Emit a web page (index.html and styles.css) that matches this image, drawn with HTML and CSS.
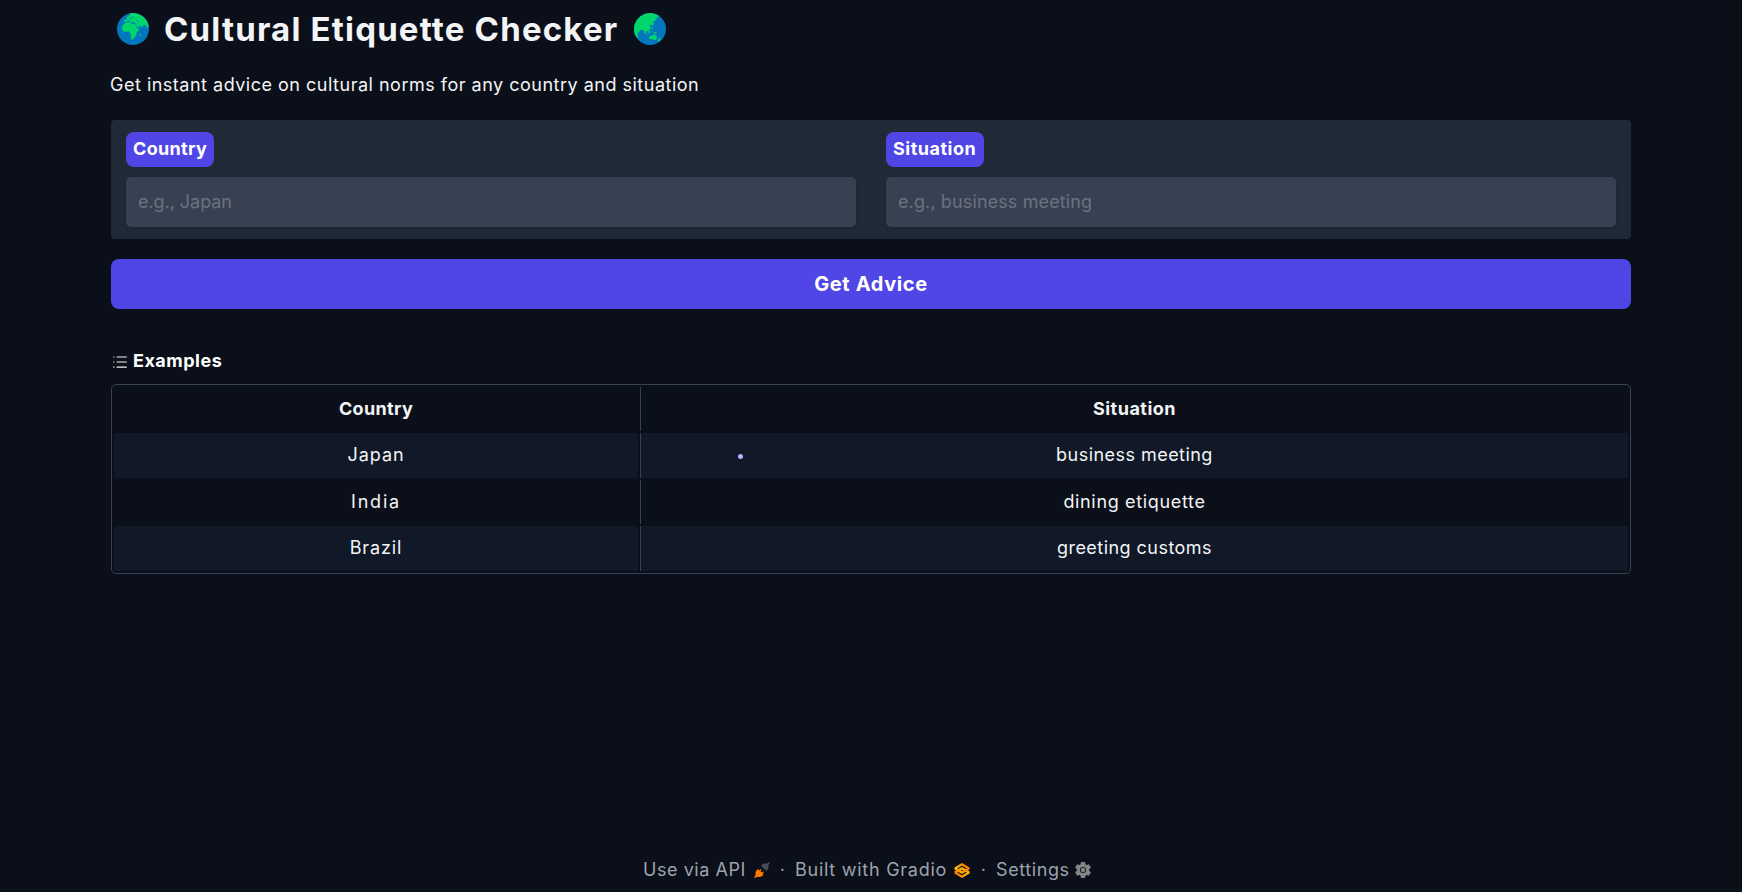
FILE: index.html
```html
<!DOCTYPE html>
<html lang="en">
<head>
<meta charset="utf-8">
<title>Cultural Etiquette Checker</title>
<link rel="stylesheet" href="styles.css">
</head>
<body>
<main class="app">
  <h1 class="title">
    <svg class="globe" viewBox="0 0 32 32" aria-hidden="true">
      <circle cx="16" cy="16" r="16" fill="#0277bd"/>
      <path fill="#00d66b" d="M5 13.500L8 9.800l5-.7 1.200 1.500 3.800.3 2 4.100 2.500 1.500-3 3-.5 3-3.500 4.500-1.500-1-.5-6-2-1.500-4.500.3-2-2.300z"/>
      <path fill="#00d66b" d="M6.800 8.800l.4-1.800 2.800-.5L9.500 4 12 3l1.300-2.800A16 16 0 0 1 31.800 13.500L30 15l-1.500-3.200-2 .2-1.500 2.800-2-2.800-1 3-2-1.500-1.700-3.500-2.800-.9-2 .2L12 7.600l-2.500 1z"/>
      <path fill="#00d66b" d="M22.300 21.500l1.200-1.200.1 1.900-1 1.400z"/>
      <path fill="none" stroke="#0277bd" stroke-width=".8" d="M12.500 5.800l2.300-.5 1-2M19 7.600l2.300.5"/>
    </svg>
    <span class="title-text">Cultural Etiquette Checker</span>
    <svg class="globe" viewBox="0 0 32 32" aria-hidden="true">
      <circle cx="16" cy="16" r="16" fill="#0277bd"/>
      <path fill="#00d66b" d="M1 21.500A16 16 0 0 1 25 2.800l-.8 1.700-2.700.8 1 2-3 .8.300 2.700-1 2.400-1.500-1.800-1.700 1.400 1.300 2-2.700 3.700-1.900-.5-1.300 2.500L9 17l-3 .1-1.200 2.600-1.400-.4.500 3.500-.5 2.700z"/>
      <path fill="#00d66b" d="M15 25.500l.3-2 3.200-1.200.8-1 1.500.6 1-.5 1.300 3.200-1.300 2.500-2.300-.3-1.500-.9-2.500.3zM23.500 28l2.200-3.500 1.200 1.200-1.700 2.800zM10.800 18.700l2.500 2.600-.6.600-2.400-2.300zM14.600 17.700l2 .4-.6 2.100-1.600-.5zM17.800 14l1.500 2.100-.7.700-1.200-1.500zM19.500 18.500l3.300 1.200-.3 1.300-2.500-.8z"/>
    </svg>
  </h1>
  <p class="subtitle">Get instant advice on cultural norms for any country and situation</p>

  <form class="panel">
    <div class="field">
      <label class="badge badge-country" for="country">Country</label>
      <input class="input input-country" id="country" type="text" placeholder="e.g., Japan">
    </div>
    <div class="field">
      <label class="badge badge-situation" for="situation">Situation</label>
      <input class="input input-situation" id="situation" type="text" placeholder="e.g., business meeting">
    </div>
  </form>

  <button class="submit" type="button">Get Advice</button>

  <h2 class="examples-label">
    <svg class="list-icon" viewBox="0 0 32 32" aria-hidden="true"><path fill="currentColor" d="M10 6h18v2H10zm0 18h18v2H10zm0-9h18v2H10zm-6 0h2v2H4zm0-9h2v2H4zm0 18h2v2H4z"/></svg>
    <span>Examples</span>
  </h2>

  <div class="table-wrap">
    <table class="examples">
      <colgroup><col class="col-country"><col></colgroup>
      <thead>
        <tr class="row-short"><th class="t-country">Country</th><th class="t-situation">Situation</th></tr>
      </thead>
      <tbody>
        <tr class="row-tall"><td class="t-japan">Japan</td><td>business meeting</td></tr>
        <tr class="row-short"><td class="t-india">India</td><td class="t-dining">dining etiquette</td></tr>
        <tr class="row-tall"><td class="t-brazil">Brazil</td><td>greeting customs</td></tr>
      </tbody>
    </table>
    <span class="pointer-dot"></span>
  </div>

  <footer class="footer">
    <span class="link-api">Use via API</span>
    <svg class="api-icon" viewBox="0 0 16 16" aria-hidden="true">
      <path fill="#ff7c00" d="M.2 15.200l1.500-2.400c-.7-2.400.2-4.600 2.400-5.900l1.500 1.500 1.300-1.300.8.800-1.300 1.300 1.400 1.400 1.300-1.300.8.800-1.300 1.300.9.900c-1.200 2.400-3.500 3.100-5.900 2.400L1 15.900z"/>
      <path fill="#454c5b" d="M15.800.8l-1.500 2.400c.7 2.200-.1 4.300-2.200 5.500L7.200 3.900c1.200-2.300 3.500-2.900 5.600-2.200L15.100.1z"/>
    </svg>
    <span class="sep">·</span>
    <span class="link-built">Built with Gradio</span>
    <svg class="gradio-icon" viewBox="28 82 519 412" preserveAspectRatio="none" aria-hidden="true">
      <defs>
        <linearGradient id="g" gradientUnits="userSpaceOnUse" x1="60" y1="341" x2="429" y2="120"><stop stop-color="#f9d100"/><stop offset="1" stop-color="#f97700"/></linearGradient>
        <linearGradient id="h" gradientUnits="userSpaceOnUse" x1="513" y1="235" x2="143" y2="455"><stop stop-color="#f9d100"/><stop offset="1" stop-color="#f97700"/></linearGradient>
      </defs>
      <g fill="none" stroke-width="66" stroke-linejoin="bevel">
        <path stroke="url(#h)" d="M287.500 229L86 344.500 287.500 460 489 344.500z"/>
        <path stroke="url(#g)" d="M287.500 116L86 231.500 287.500 347 489 231.500z"/>
        <path stroke="url(#h)" d="M86 344L288 229"/>
      </g>
    </svg>
    <span class="sep">·</span>
    <span class="link-settings">Settings</span>
    <svg class="gear-icon" viewBox="0 0 16 16" aria-hidden="true">
      <path fill="#858585" fill-rule="evenodd" d="M6 0h4l.4 2.300 1.300.8 2.200-.9 2 3.500-1.800 1.500v1.600l1.800 1.500-2 3.500-2.200-.9-1.300.8L10 16H6l-.4-2.300-1.300-.8-2.200.9-2-3.500 1.800-1.500V7.200L.1 5.700l2-3.500 2.200.9 1.300-.8zM8 5a3 3 0 1 0 0 6 3 3 0 0 0 0-6z"/>
      <circle cx="8" cy="8" r="2.200" fill="#858585"/>
    </svg>
  </footer>
</main>
</body>
</html>
```
FILE: styles.css
```css
* { box-sizing: border-box; }

body {
  margin: 0;
  background: #0b0f19;
  color: #f3f4f6;
  font-family: "Inter", sans-serif;
  font-size: 18px;
  line-height: 28px;
  letter-spacing: 0.46px;
}

.app {
  display: flex;
  flex-direction: column;
  width: 1520px;
  height: 892px;
  margin: 0 auto;
  padding: 9px 0 8px;
}

.title {
  display: flex;
  align-items: center;
  height: 40px;
  margin: 0;
  padding-left: 6px;
  font-size: 33px;
  font-weight: 700;
  line-height: 40px;
  letter-spacing: 1.18px;
}

.title-text { width: 456px; margin: 0 14px 0 15px; white-space: nowrap; }
.globe { width: 32px; height: 32px; flex: none; }

.subtitle { margin: 22px 0 21px -1px; letter-spacing: 0.5px; white-space: nowrap; }

.panel {
  display: flex;
  gap: 30px;
  height: 119px;
  padding: 12px 15px;
  border-radius: 4px;
  background: #1f2937;
}

.field {
  display: flex;
  flex: 1;
  flex-direction: column;
  align-items: flex-start;
  gap: 10px;
}

.badge {
  height: 35px;
  padding-left: 7px;
  border-radius: 8px;
  background: #4f46e5;
  color: #fff;
  font-weight: 700;
  line-height: 33px;
}

.badge-country { width: 88px; letter-spacing: 0.33px; }
.badge-situation { width: 98px; letter-spacing: 0.5px; }

.input {
  width: 100%;
  height: 50px;
  padding: 0 12px 2px;
  border: 0;
  border-radius: 5px;
  background: #374151;
  box-shadow: 0 1px 3px rgba(0, 0, 0, 0.15);
  color: #f3f4f6;
  font: inherit;
}

.input::placeholder { color: #6b7280; opacity: 1; }
.input-country { letter-spacing: -0.05px; }
.input-situation { letter-spacing: 0.12px; }

.submit {
  flex: none;
  height: 50px;
  margin-top: 20px;
  padding: 0;
  border: 0;
  border-radius: 8px;
  background: #4f46e5;
  color: #fff;
  font: 700 20px/28px "Inter", sans-serif;
  letter-spacing: 0.62px;
}

.examples-label {
  display: flex;
  align-items: center;
  gap: 4px;
  height: 28px;
  margin: 38px 0 9px;
  color: #fff;
  font-size: 18px;
  font-weight: 700;
  letter-spacing: 0.5px;
}

.list-icon { width: 18px; height: 18px; margin-top: 1px; color: #f3f4f6; }

.table-wrap {
  position: relative;
  height: 190px;
  border: 1px solid #374151;
  border-radius: 5px;
}

.examples {
  width: 100%;
  table-layout: fixed;
  border-spacing: 2px;
  text-align: center;
}

.col-country { width: 524px; }
.examples th, .examples td { padding: 0; line-height: 44px; vertical-align: top; }
.examples th + th, .examples td + td { border-left: 1px solid #374151; }
.row-short { height: 44px; }
.row-tall { height: 45px; }
.row-tall td { background: #111827; }
.examples .t-country { letter-spacing: 0.33px; }
.examples .t-situation { letter-spacing: 0.5px; }
.examples .t-japan { letter-spacing: 0.95px; }
.examples .t-brazil { letter-spacing: 0.9px; }
.examples .t-india { letter-spacing: 1.8px; }
.examples .t-dining { letter-spacing: 0.66px; }

.pointer-dot {
  position: absolute;
  top: 69px;
  left: 626px;
  width: 5px;
  height: 5px;
  border-radius: 50%;
  background: #b9adff;
}

.footer {
  display: flex;
  align-items: center;
  height: 28px;
  margin-top: auto;
  padding-left: 532px;
  color: #9ca3af;
  white-space: nowrap;
}

.link-api { width: 111px; letter-spacing: 0.55px; }
.link-built { width: 158px; letter-spacing: 0.74px; }
.link-settings { width: 79px; letter-spacing: 0.6px; }
.sep { width: 25px; text-align: center; }
.api-icon { width: 16px; height: 16px; }
.gradio-icon { width: 18px; height: 15px; }
.gear-icon { width: 16px; height: 16px; }
```
